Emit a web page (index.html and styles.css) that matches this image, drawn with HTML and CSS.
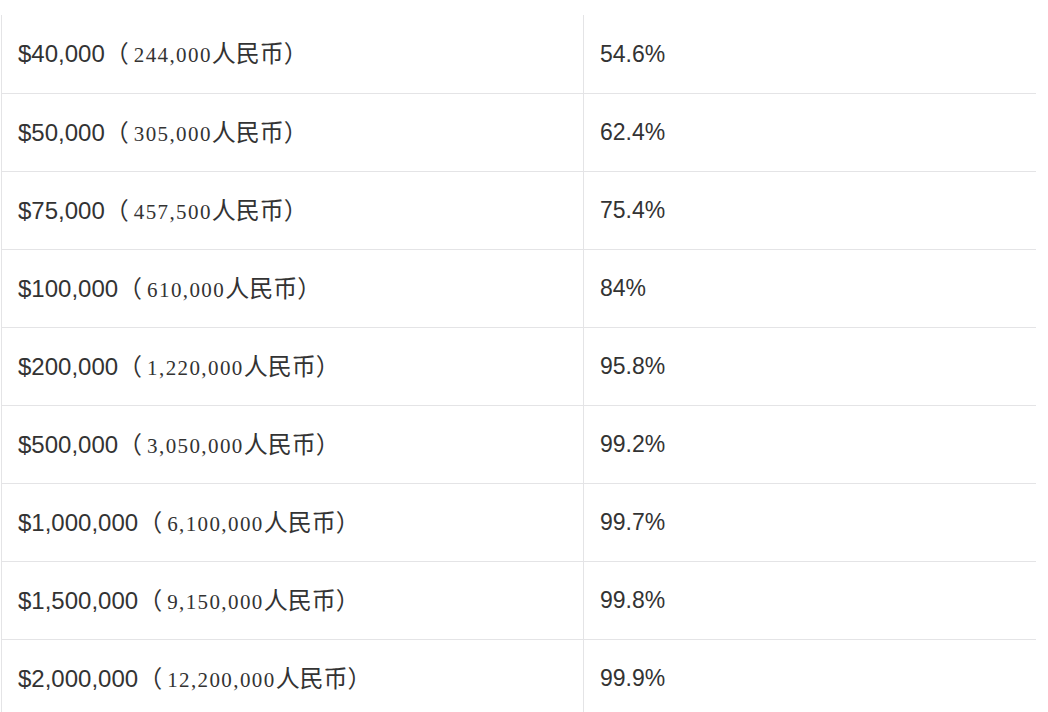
FILE: index.html
```html
<!DOCTYPE html>
<html lang="zh-CN">
<head>
<meta charset="utf-8">
<title>收入排名</title>
<link rel="stylesheet" href="styles.css">
</head>
<body>
<div class="wrap">
<table class="income">
<tbody>
<tr><td class="amt">$40,000<span class="cny">（<span class="num">244,000</span>人民币）</span></td><td class="pct">54.6%</td></tr>
<tr><td class="amt">$50,000<span class="cny">（<span class="num">305,000</span>人民币）</span></td><td class="pct">62.4%</td></tr>
<tr><td class="amt">$75,000<span class="cny">（<span class="num">457,500</span>人民币）</span></td><td class="pct">75.4%</td></tr>
<tr><td class="amt">$100,000<span class="cny">（<span class="num">610,000</span>人民币）</span></td><td class="pct">84%</td></tr>
<tr><td class="amt">$200,000<span class="cny">（<span class="num">1,220,000</span>人民币）</span></td><td class="pct">95.8%</td></tr>
<tr><td class="amt">$500,000<span class="cny">（<span class="num">3,050,000</span>人民币）</span></td><td class="pct">99.2%</td></tr>
<tr><td class="amt">$1,000,000<span class="cny">（<span class="num">6,100,000</span>人民币）</span></td><td class="pct">99.7%</td></tr>
<tr><td class="amt">$1,500,000<span class="cny">（<span class="num">9,150,000</span>人民币）</span></td><td class="pct">99.8%</td></tr>
<tr><td class="amt">$2,000,000<span class="cny">（<span class="num">12,200,000</span>人民币）</span></td><td class="pct">99.9%</td></tr>
</tbody>
</table>
</div>
</body>
</html>
```

FILE: styles.css
```css
html, body {
  margin: 0;
  padding: 0;
  background: #ffffff;
}

.wrap {
  padding-top: 15px;
  padding-left: 1px;
}

.income {
  border-collapse: collapse;
  width: 1035px;
  table-layout: fixed;
  font-family: "Liberation Sans", Arial, "Noto Sans CJK SC", sans-serif;
  font-size: 24px;
  color: #333333;
}

.income td {
  height: 78px;
  padding: 0 0 0 16px;
  border-bottom: 1px solid #e4e4e6;
  vertical-align: middle;
  white-space: nowrap;
  box-sizing: border-box;
  line-height: 28px;
}

.income td.amt {
  width: 582px;
  border-left: 1px solid #e4e4e6;
  border-right: 1px solid #e4e4e6;
}

.income td.pct {
  padding-left: 16px;
  font-size: 23px;
}

.cny {
  font-family: "Noto Sans CJK SC", sans-serif;
  font-size: 24px;
  line-height: 28px;
  color: #333333;
}

.num {
  font-family: "Liberation Serif", "Times New Roman", serif;
  font-size: 21px;
  letter-spacing: 1.4px;
  margin-left: 5px;
}
```
